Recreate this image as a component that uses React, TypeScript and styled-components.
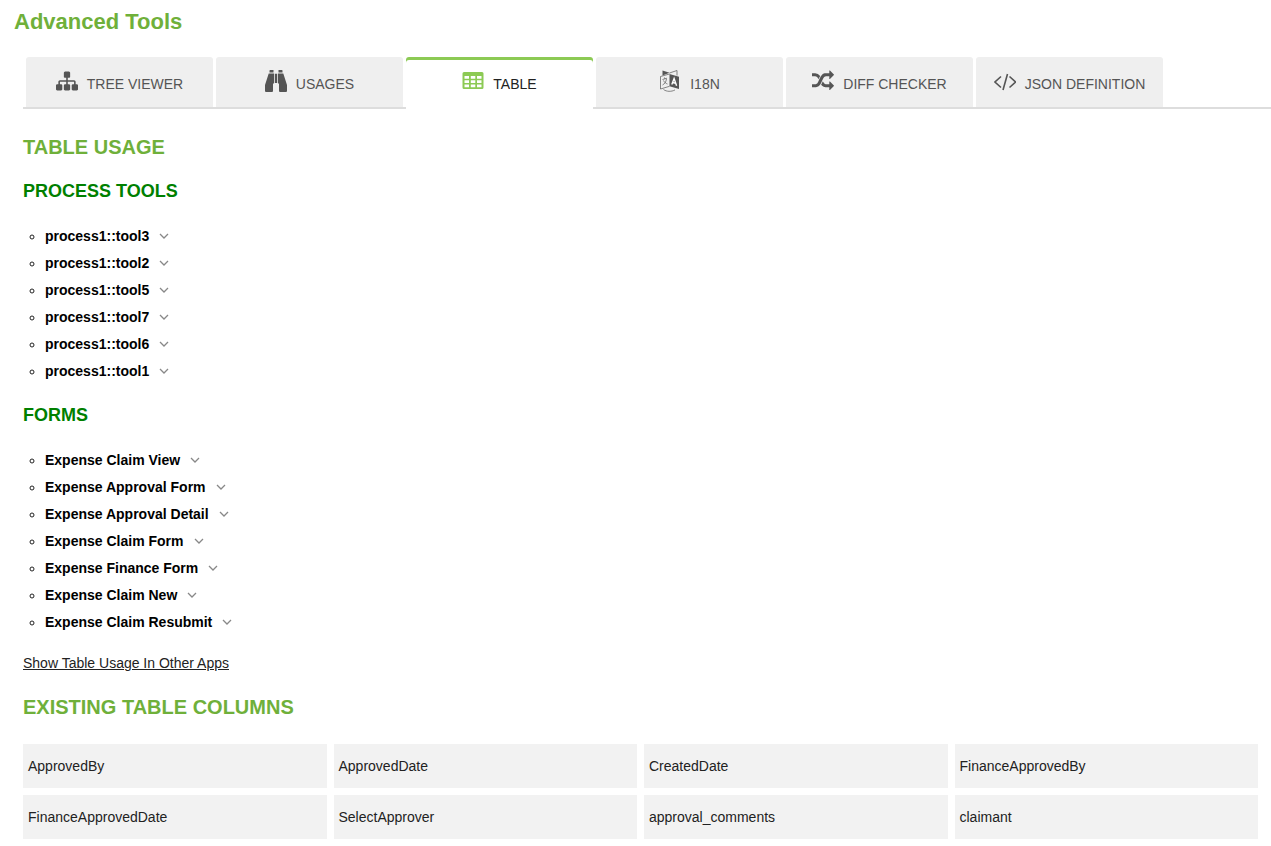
import React, { useState } from 'react';
import styled, { createGlobalStyle, css } from 'styled-components';

const GlobalStyle = createGlobalStyle`
  * { box-sizing: border-box; }
  body {
    margin: 0;
    background: #fff;
    color: #222;
    font-family: 'Liberation Sans', Arial, sans-serif;
    font-size: 14px;
    line-height: 20px;
  }
`;

const Page = styled.main`
  display: flex;
  flex-direction: column;
  padding-top: 8px;
`;

const Title = styled.h1`
  margin: 0 0 22px 14px;
  color: #6fb03a;
  font-size: 22px;
  line-height: 27px;
`;

const TabBar = styled.div`
  display: flex;
  gap: 3px;
  margin-left: 23px;
  padding-left: 3px;
  border-bottom: 2px solid #ddd;
`;

const Tab = styled.button<{ $active: boolean }>`
  display: flex;
  align-items: center;
  justify-content: center;
  gap: 9px;
  flex: 0 1 187px;
  height: 50px;
  padding: 0;
  border: 0;
  border-radius: 3px 3px 0 0;
  background: #efefef;
  color: #555;
  font: inherit;
  text-transform: uppercase;
  white-space: nowrap;
  cursor: pointer;
  ${({ $active }) =>
    $active &&
    css`
      height: 52px;
      margin-bottom: -2px;
      padding-bottom: 2px;
      background: #fff;
      box-shadow: inset 0 3px #8cca54;
      color: #222;
      svg { color: #8cca54; }
    `}
`;

const TabIcon = styled.svg`
  flex: none;
  width: 22px;
  height: 22px;
  margin-bottom: 2px;
  fill: currentColor;
`;

const TabLabel = styled.span`
  padding-top: 4px;
`;

const Panel = styled.section`
  display: flex;
  flex-direction: column;
  align-items: flex-start;
  padding: 24px 13px 0 23px;
`;

const SectionTitle = styled.h2`
  margin: 0;
  color: #6fb03a;
  font-size: 20px;
  line-height: 28px;
  text-transform: uppercase;
`;

const GroupTitle = styled.h3`
  margin: 19px 0 21px;
  color: #008000;
  font-size: 18px;
  line-height: 22px;
  text-transform: uppercase;
`;

const UsageList = styled.ul`
  margin: 0;
  padding: 0 0 0 22px;
  list-style: circle;
`;

const UsageItem = styled.li`
  height: 27px;
  line-height: 27px;
`;

const UsageToggle = styled.button`
  display: inline-flex;
  align-items: center;
  gap: 10px;
  padding: 0;
  border: 0;
  background: none;
  color: #000;
  font: inherit;
  font-weight: bold;
  cursor: pointer;
`;

const Chevron = styled.svg`
  width: 10px;
  height: 6px;
  margin-bottom: 2px;
  fill: none;
  stroke: #888;
  stroke-width: 1.3;
`;

const OtherAppsLink = styled.a`
  margin: 17px 0 20px;
  color: #222;
`;

const ColumnGrid = styled.ul`
  display: grid;
  grid-template-columns: repeat(4, 1fr);
  gap: 7px;
  width: 100%;
  margin: 23px 0 0;
  padding: 0;
  list-style: none;
`;

const ColumnCell = styled.li`
  padding: 12px 5px;
  background: #f2f2f2;
`;

const SitemapIcon = () => (
  <TabIcon viewBox="0 0 1792 1792" aria-hidden="true">
    <path d="M1792 1248v320q0 40-28 68t-68 28h-320q-40 0-68-28t-28-68v-320q0-40 28-68t68-28h96v-192h-512v192h96q40 0 68 28t28 68v320q0 40-28 68t-68 28h-320q-40 0-68-28t-28-68v-320q0-40 28-68t68-28h96v-192h-512v192h96q40 0 68 28t28 68v320q0 40-28 68t-68 28h-320q-40 0-68-28t-28-68v-320q0-40 28-68t68-28h96v-192q0-52 38-90t90-38h512v-192h-96q-40 0-68-28t-28-68v-320q0-40 28-68t68-28h320q40 0 68 28t28 68v320q0 40-28 68t-68 28h-96v192h512q52 0 90 38t38 90v192h96q40 0 68 28t28 68z" />
  </TabIcon>
);

const BinocularsIcon = () => (
  <TabIcon viewBox="0 0 22 22" aria-hidden="true">
    <path d="M5 0h3.500v2.600h-4v-2.100z M13.500 0h3.500l.5 .5v2.100h-4z M3.700 3.500H9V13l-1 1v7.300l-.7.700H.7L0 21.300V15z M18.300 3.500H13V13l1 1v7.300l.7.700h6.600l.7-.7V15z M9.800 3.800h2.400V13H9.800z" />
  </TabIcon>
);

const TableIcon = () => (
  <TabIcon viewBox="0 0 22 22" aria-hidden="true">
    <path
      fillRule="evenodd"
      d="M2 2h18a1.500 1.500 0 0 1 1.500 1.500v14a1.500 1.500 0 0 1-1.500 1.500h-18a1.500 1.500 0 0 1-1.500-1.500v-14a1.500 1.500 0 0 1 1.500-1.500z
      M2.500 6v2.800h4.500v-2.800z M8.800 6v2.800h4.500v-2.800z M15 6v2.800h4.500v-2.800z
      M2.500 10.300v2.700h4.500v-2.700z M8.800 10.300v2.700h4.500v-2.700z M15 10.300v2.700h4.500v-2.700z
      M2.500 14.600v2.700h4.500v-2.700z M8.800 14.600v2.700h4.500v-2.700z M15 14.600v2.700h4.500v-2.700z"
    />
  </TabIcon>
);

const LanguageIcon = () => (
  <TabIcon viewBox="0 0 22 22" aria-hidden="true">
    <path d="M3.500 0.500l7 2.300-7 2.700z" />
    <path d="M10.500 4l9.500 2.800v12.200l-9.500-2.700z" />
    <path
      d="M10.500 4L1.500 6.500v12.500l9-2.700M10.500 3L18 0.500v5M4.500 19.500c3 2.300 8 2.400 11.500 0.400M3.500 9.500l4.500-1.300M5.500 7.500l0.500 1.500M7.500 9c-0.500 3-2 5-4 6M4.500 10.500c1 2 2.500 3 4 3.500"
      fill="none"
      stroke="currentColor"
      strokeWidth="0.700"
    />
    <path d="M12.800 14.500l2.300-6 2.500 7.200M13.600 12.500l3.200 0.900" fill="none" stroke="#fff" strokeWidth="1.400" />
  </TabIcon>
);

const ShuffleIcon = () => (
  <TabIcon viewBox="0 0 1792 1792" aria-hidden="true">
    <path d="M666 481q-60 92-137 273-22-45-37-72.500t-40.500-63.500-51-56.500-63-35-81.500-14.500h-224q-14 0-23-9t-9-23v-192q0-14 9-23t23-9h224q250 0 410 225zm1126 799q0 14-9 23l-320 320q-9 9-23 9-13 0-22.500-9.500t-9.500-22.500v-192q-32 0-85 .5t-81 1-73-1-71-5-64-10.500-63-18.500-58-28.500-59-40-55-53.500-56-69.500q59-93 136-273 22 45 37 72.500t40.500 63.500 51 56.500 63 35 81.500 14.500h256v-192q0-14 9-23t23-9q12 0 24 10l319 319q9 9 9 23zm0-896q0 14-9 23l-320 320q-9 9-23 9-13 0-22.500-9.500t-9.500-22.500v-192h-256q-48 0-87 15t-69 45-51 61.500-45 77.500q-32 62-78 171-29 66-49.500 111t-54 105-64 100-74 83-90 68.500-106.500 42-128 16.500h-224q-14 0-23-9t-9-23v-192q0-14 9-23t23-9h224q48 0 87-15t69-45 51-61.500 45-77.500q32-62 78-171 29-66 49.500-111t54-105 64-100 74-83 90-68.500 106.500-42 128-16.500h256v-192q0-14 9-23t23-9q12 0 24 10l319 319q9 9 9 23z" />
  </TabIcon>
);

const CodeIcon = () => (
  <TabIcon viewBox="0 0 22 22" aria-hidden="true">
    <path d="M7 6.500L1 12l6 5.500M15.500 6.500l6 5.500-6 5.500M13.500 4l-4.500 16" fill="none" stroke="currentColor" strokeWidth="1.600" />
  </TabIcon>
);

const tabs = [
  { label: 'Tree Viewer', Icon: SitemapIcon },
  { label: 'Usages', Icon: BinocularsIcon },
  { label: 'Table', Icon: TableIcon },
  { label: 'i18n', Icon: LanguageIcon },
  { label: 'Diff Checker', Icon: ShuffleIcon },
  { label: 'JSON Definition', Icon: CodeIcon },
];

const groups = [
  {
    title: 'Process Tools',
    items: ['process1::tool3', 'process1::tool2', 'process1::tool5', 'process1::tool7', 'process1::tool6', 'process1::tool1'],
  },
  {
    title: 'Forms',
    items: [
      'Expense Claim View',
      'Expense Approval Form',
      'Expense Approval Detail',
      'Expense Claim Form',
      'Expense Finance Form',
      'Expense Claim New',
      'Expense Claim Resubmit',
    ],
  },
];

const columns = [
  'ApprovedBy',
  'ApprovedDate',
  'CreatedDate',
  'FinanceApprovedBy',
  'FinanceApprovedDate',
  'SelectApprover',
  'approval_comments',
  'claimant',
];

export default function App() {
  const [active, setActive] = useState('Table');
  return (
    <Page>
      <GlobalStyle />
      <Title>Advanced Tools</Title>
      <TabBar role="tablist">
        {tabs.map(({ label, Icon }) => (
          <Tab
            key={label}
            type="button"
            role="tab"
            aria-selected={label === active}
            $active={label === active}
            onClick={() => setActive(label)}
          >
            <Icon />
            <TabLabel>{label}</TabLabel>
          </Tab>
        ))}
      </TabBar>
      <Panel role="tabpanel">
        <SectionTitle>Table Usage</SectionTitle>
        {groups.map(({ title, items }) => (
          <React.Fragment key={title}>
            <GroupTitle>{title}</GroupTitle>
            <UsageList>
              {items.map((item) => (
                <UsageItem key={item}>
                  <UsageToggle type="button">
                    {item}
                    <Chevron viewBox="0 0 10 6" aria-hidden="true">
                      <path d="M1 1l4 4 4-4" />
                    </Chevron>
                  </UsageToggle>
                </UsageItem>
              ))}
            </UsageList>
          </React.Fragment>
        ))}
        <OtherAppsLink href="#other-apps">Show Table Usage In Other Apps</OtherAppsLink>
        <SectionTitle>Existing Table Columns</SectionTitle>
        <ColumnGrid>
          {columns.map((column) => (
            <ColumnCell key={column}>{column}</ColumnCell>
          ))}
        </ColumnGrid>
      </Panel>
    </Page>
  );
}
